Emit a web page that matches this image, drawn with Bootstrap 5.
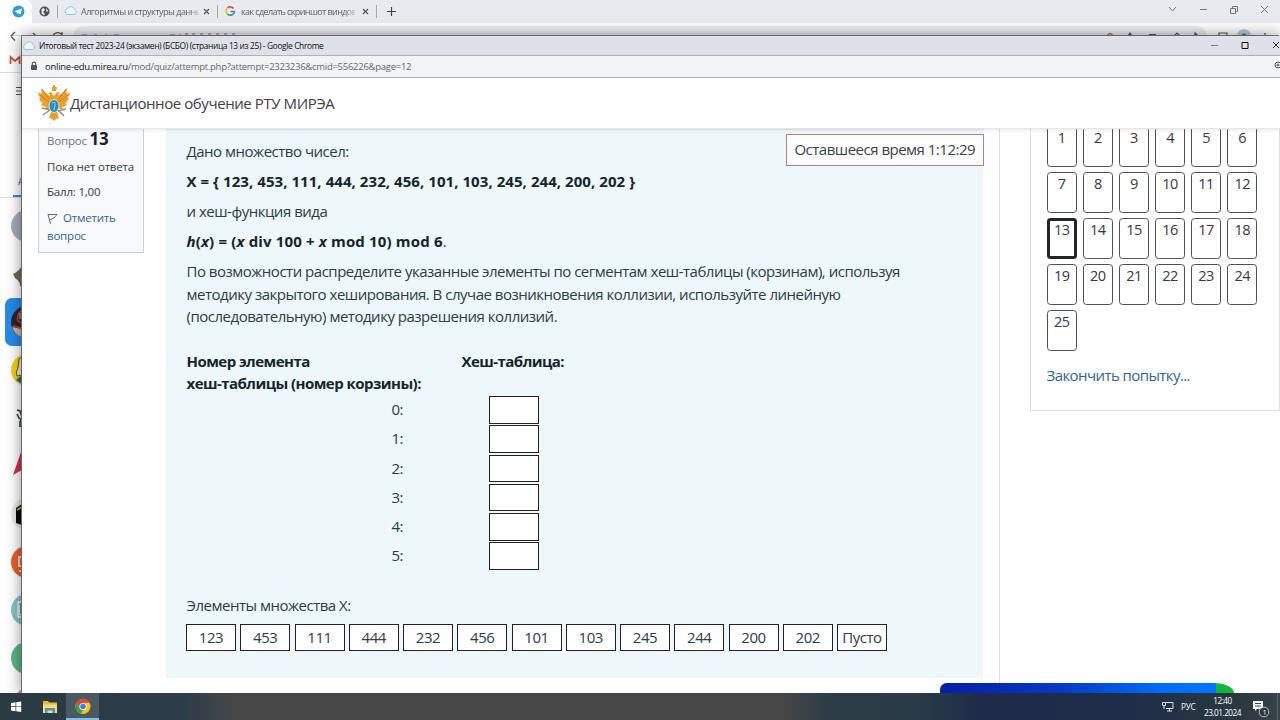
<!DOCTYPE html>
<html lang="ru">
<head>
<meta charset="utf-8">
<title>Итоговый тест 2023-24</title>
<link href="https://cdn.jsdelivr.net/npm/bootstrap@5.3.0/dist/css/bootstrap.min.css" rel="stylesheet">
<script src="https://cdn.jsdelivr.net/npm/bootstrap@5.3.0/dist/js/bootstrap.bundle.min.js"></script>
<style>
body{width:1280px;height:720px;font-family:"Open Sans","Noto Sans",sans-serif;font-size:15px;line-height:22.5px;color:#343a40;background:#fff}
svg{display:block;flex:none}
.win-back,.win-front,.banner,.taskbar{position:absolute}
.win-back{inset:0 0 27px 0}
.tabs{height:23px;background:#e8eaee;font-size:9px;color:#5c5f64;line-height:23px;letter-spacing:-.5px}
.tab-on{width:32px;height:23px;background:#fff;border-radius:0 6px 0 0}
.tab-text{white-space:nowrap;-webkit-mask-image:linear-gradient(90deg,#000 90%,rgba(0,0,0,.3))}
.win-front{left:22px;top:36px;width:1258px;height:657px;background:#fff;box-shadow:0 0 15px rgba(0,0,0,.5),-1px -1px 0 #888}
.titlebar{height:19px;background:#dee1e8;font-size:8.4px;line-height:18px;color:#111;letter-spacing:-.36px}
.urlbar{height:23px;background:#f1f3f5;border-top:1px solid #aeb2b6;border-bottom:1px solid #b4b8bb;font-size:9.5px;line-height:21px;letter-spacing:-.27px;color:#66696d}
.urlbar b{font-weight:400;color:#202124}
.site{height:51px;box-shadow:0 1px 4px rgba(0,0,0,.1);border-bottom:1px solid #e4e6e8;z-index:2;position:relative;background:#fff}
.site-name{font-size:15px;letter-spacing:-.42px;color:#3c4043}
.page-body{height:564px}
.q-info{width:106px;height:124px;margin-left:16px;border:1px solid #cad0d7;border-top:0;background:#f8f9fa;font-size:11.5px;line-height:18px;padding:1px 8px;letter-spacing:-.2px}
.q-info strong{font-size:17px;color:#1d2125;letter-spacing:-.2px}
.q-info .step{margin-bottom:7.6px}
.lnk{color:#326690}
.q-body{width:817px;height:549px;margin-left:22px;background:#eef7fa;padding:10px 0 0 20.5px;color:#2b3d45;border-top:1px solid #dfe9ee;letter-spacing:-.49px}
.q-body p{margin:0 0 7.5px}
.q-body b{color:#14262c}
.q-body .set{letter-spacing:.06px}
.q-body .fn{letter-spacing:.16px}
.timer{position:absolute;left:764px;top:98px;width:197.5px;height:32px;border:1px solid #c07a7c;background:#fff;line-height:29px;text-align:center;color:#3a3f42;z-index:3;letter-spacing:-.5px}
.q-line{border-right:1px solid #dee2e6;width:17px}
.side{width:250px;height:282px;margin-left:30px;border:1px solid #dcdfe3;border-top:0;padding-left:15.5px}
.qn{display:grid;grid-template-columns:repeat(6,30.5px);column-gap:5.6px;row-gap:5.5px;margin-top:-3px}
.qn span{height:40.5px;border:1px solid #4c5156;border-radius:3.5px;text-align:center;line-height:21px;font-size:14.5px;letter-spacing:-.5px}
.qn .now{border:3px solid #22262a;line-height:17.5px}
.finish{margin-top:13px;letter-spacing:-.58px}
.tbl-head{margin-top:22px}
.tbl-head b{width:275px;letter-spacing:-.54px}
.drops{display:grid;grid-template-columns:302.5px 50.4px;row-gap:1.8px;margin-top:1.5px}
.drops span{height:27.5px;line-height:27.5px;padding-left:205px}
.drops i{height:27.5px;background:#fff;border:1px solid #222}
.chips{gap:4.25px;margin-left:-.5px}
.chip{width:50px;height:27.5px;background:#fff;border:1px solid #222;text-align:center;line-height:25px;white-space:nowrap}
.q-body .elems{margin-top:24px}
.banner{left:940px;top:683px;width:294px;height:10px;border-radius:8px 24px 0 0/8px 12px 0 0;background:linear-gradient(90deg,#0420a4,#0738c0 40%,#006cf8 75%,#0074ff 94%,#15b53c 94%)}
.taskbar{left:0;top:693px;width:1280px;height:27px;background:linear-gradient(90deg,#2b3b42 0,#2c3c4a 180px,#474747 235px,#474747 780px,#2c3c46 830px,#293b48 920px,#1f2c49 980px,#1f2d49 1130px,#2a3840 1240px,#394447);color:#fff}
.tb-text{font-size:8.2px;line-height:12px;letter-spacing:-.5px}
.tb-clock{width:37px;padding-top:1px}
</style>
</head>
<body class="overflow-hidden position-relative">
<div class="win-back">
  <div class="tabs d-flex align-items-center">
    <div class="tab-on d-flex align-items-center ps-2"><svg class="ms-1" width="13" height="13" viewBox="0 0 13 13"><circle cx="6.5" cy="6.5" r="6" fill="#2b9fd0"/><path d="M2.4 6.3 10 3.5 8.7 9.8 6.2 8 5.2 9 4.8 7.2z" fill="#fff"/></svg></div>
    <svg width="48" height="23" viewBox="32 0 48 23"><circle cx="44.500" cy="11.500" r="5" fill="#4a4d51"/><path d="M41.500 9l2.500-1 1 2-2 2 2 2-1 1.500-2.500-2zM46 8l2.500 3-2 1z" fill="#e8eaee"/><path d="M57.500 5v13" stroke="#a5a8ac"/><path d="M67 14.500h7a2.600 2.600 0 0 0 .5-5 4 4 0 0 0-7.500-.5 3 3 0 0 0 0 5.500z" fill="#eef5fb" stroke="#97c3dd"/></svg>
    <div class="tab-text" style="width:118px;margin-left:1px">Алгоритмы и структуры данны</div>
    <svg width="40" height="23" viewBox="199 0 40 23"><path d="M204 9l5 5m0-5l-5 5" stroke="#555" stroke-width="1.1"/><path d="M217.500 5v13" stroke="#a5a8ac"/><path d="M233.500 8.500a4 4 0 0 0-6-.5" fill="none" stroke="#e04535" stroke-width="1.500"/><path d="M227.500 8a4 4 0 0 0 0 6" fill="none" stroke="#f3b51d" stroke-width="1.500"/><path d="M227.500 14a4 4 0 0 0 5 .5" fill="none" stroke="#31a350" stroke-width="1.500"/><path d="M230.500 11.500h4q0 2-2 3" fill="none" stroke="#4680ea" stroke-width="1.500"/></svg>
    <div class="tab-text" style="width:114px;margin-left:2px;letter-spacing:-.6px">как сделать скриншот виндов</div>
    <svg width="60" height="23" viewBox="355 0 60 23"><path d="M363 9l5 5m0-5l-5 5" stroke="#555" stroke-width="1.100"/><path d="M376.500 5v13" stroke="#a5a8ac"/><path d="M387 11.500h9M391.500 7v9" stroke="#444" stroke-width="1.200"/></svg>
    <svg class="ms-auto" width="120" height="23" viewBox="1160 0 120 23" fill="none" stroke="#777"><path d="M1169 7l3.500 4 3.500-4M1200 9.500h7M1230.500 8.500h5v5h-5zM1232.500 8.500v-2h5v5h-2M1261 6l7 7m0-7l-7 7"/></svg>
  </div>
  <svg width="1280" height="13" viewBox="0 23 1280 13"><rect y="23" width="1280" height="13" fill="#fff"/><rect x="73" y="26" width="1134" height="22" rx="11" fill="#edeff2"/><path d="M20 36.500H10.500M15 32l-4.500 4.500M33 33l3 3M53 36a5 5 0 0 1 9-1v-3" fill="none" stroke="#555" stroke-width="1.300"/><path d="M82 35h5m7 0h3m8 0h2m7 0h5M170 35h5m5-1v2m5-2h3m4 0h3m5 0h3m5 0h3m5 0h3m5 0h3m5 0h3" stroke="#777" stroke-width="1.200"/><path d="M1107 36q3-5 6 0" stroke="#d66a50" stroke-width="1.500" fill="none"/><path d="M1128 36l2-3 2 3M1149 34.500h7M1174 36l3-3 3 3M1195 36v-3l3 3M1219 36v-3h8v3M1265 33v3" stroke="#555" stroke-width="1.200" fill="none"/><circle cx="1244" cy="36" r="7" fill="#bccbdc"/><path d="M1241 36q3-5 6 0" fill="#455"/></svg>
  <svg width="22" height="657" viewBox="0 36 22 657"><path d="M11 36.500l4 4" stroke="#555" stroke-width="1.300"/><path d="M10.500 64v-7l4.500 4 4.500-4v7" fill="none" stroke="#d84a3d" stroke-width="1.700"/><path d="M0 72.500h22" stroke="#d9dcdf"/><path d="M16 87.500h6M16 91h6M16 94.500h6" stroke="#555"/><text x="18" y="185" font-size="10" fill="#3a78a8">А</text><path d="M0 197.500h22" stroke="#dde2e6"/><path d="M13 196h9" stroke="#3192c5" stroke-width="2"/><circle cx="27" cy="226" r="16" fill="#a5afba"/><path d="M13 274q5-2 9-8v20h-2q0-5-5-8z" fill="#716c50"/><rect x="5" y="298" width="30" height="48" rx="7" fill="#278be9"/><circle cx="27" cy="322" r="16" fill="#33212a"/><path d="M22 310q-6 4-4 11l4 2" stroke="#b64641" stroke-width="1.500" fill="none"/><path d="M20 313v6" stroke="#ddd"/><path d="M12 327l10 2v8q-7-2-10-10z" fill="#c9b99b"/><path d="M13 326l9 2" stroke="#b64641" stroke-width="1.500"/><circle cx="27" cy="370" r="16" fill="#f6cf1d"/><path d="M22 357l-3 2-1 9q-3 4-1 8l5-1" fill="#f9efb4" stroke="#444" stroke-width=".9"/><path d="M16 380l6-5v9z" fill="#216895"/><path d="M17 410l3 1 2 6M17 414l2 4 3 2M22 419l-2 3v5" fill="none" stroke="#263d66" stroke-width="1.600"/><path d="M13 475l8-23h1v18z" fill="#d1354b"/><circle cx="27" cy="514" r="16" fill="#e9e9e9"/><path d="M16 508l6-4v21l-6-2z" fill="#090909"/><path d="M17 510l5-3" stroke="#e8b048" stroke-width="1.500"/><circle cx="27" cy="562" r="16" fill="#ed602b"/><path d="M22 557h-3v9h3M19 571h3" fill="none" stroke="#fff" stroke-width="1.500"/><circle cx="27" cy="610" r="16" fill="#87c3c8"/><path d="M22 602h-4v15h4M20 605v10" fill="none" stroke="#fff" stroke-width="1.300"/><path d="M21 604v10" stroke="#333"/><circle cx="27" cy="658" r="16" fill="#5eb888"/><circle cx="27" cy="700" r="12" fill="#ce899c"/></svg>
</div>

<main class="win-front">
  <div class="titlebar d-flex align-items-center"><svg width="17" height="18" viewBox="0 0 17 18"><path d="M3 12.500h8a3 3 0 0 0 0-5 4 4 0 0 0-7-1 3.500 3.500 0 0 0-1 6z" fill="#eef5fb" stroke="#97bbdd"/></svg><span>Итоговый тест 2023-24 (экзамен) (БСБО) (страница 13 из 25) - Google Chrome</span>
    <svg class="ms-auto" width="80" height="18" viewBox="1200 36 80 18" fill="none"><path d="M1211 44.500h7" stroke="#777"/><path d="M1242 41.500h6v6h-6z" stroke="#111"/><path d="M1273 41l6 6m0-6l-6 6" stroke="#333"/></svg>
  </div>
  <div class="urlbar d-flex"><svg width="23" height="21" viewBox="0 0 23 21"><rect x="9" y="9" width="6" height="5" rx=".7" fill="#555"/><path d="M10.300 9V7.800a1.700 1.700 0 0 1 3.400 0V9" fill="none" stroke="#555" stroke-width="1.100"/></svg><span><b>online-edu.mirea.ru</b>/mod/quiz/attempt.php?attempt=2323236&amp;cmid=556226&amp;page=12</span>
    <svg class="ms-auto" width="8" height="21" viewBox="0 0 8 21" fill="none" stroke="#555"><circle cx="6" cy="9" r="3"/><path d="M4.500 9h3M6 7.500v3"/></svg></div>
  <header class="site d-flex align-items-center">
    <svg class="ms-3" width="32" height="38" viewBox="0 0 32 38"><g fill="#eaa02d"><path d="M13 13Q8 10 3 4q1 4 0 6-2-1-3-2 0 4 3 6l-2 0q1 4 4 5l-2 1q2 3 5 3l-1 2q3 1 6-2zM19 13Q24 10 29 4q-1 4 0 6 2-1 3-2 0 4-3 6l2 0q-1 4-4 5l2 1q-2 3-5 3l1 2q-3 1-6-2z"/><path d="M14 3h1V1h2v2h2l-1 4h-4zM10 9l3-1 3 4 3-4 3 1-2 2v5H12v-5zM13 28l3-2 3 2 2 6-3 1-2 2-2-2-3-1z"/></g><path d="M4 5l7 10M2 11l9 7M28 5l-7 10M30 11l-9 7" stroke="#c4771a" stroke-width=".8"/><path d="M4 24l9 2M28 25l-8 2M5 31l7-5m8 0l6 6" stroke="#8d8f80" stroke-width="1.500"/><ellipse cx="16" cy="22" rx="5" ry="6.500" fill="#2b8dbd" stroke="#dbe5d5"/><path d="M14 19q4-2 3 2t-1 5" stroke="#94d7ee" fill="none"/></svg>
    <span class="site-name">Дистанционное обучение РТУ МИРЭА</span>
  </header>
  <div class="page-body d-flex">
    <aside class="q-info">
      <div class="step"><span class="text-secondary">Вопрос</span> <strong>13</strong></div>
      <div class="step text-nowrap">Пока нет ответа</div><div class="step">Балл: 1,00</div>
      <div class="lnk"><svg class="d-inline-block me-1" width="12" height="12" viewBox="0 0 12 12" fill="none" stroke="#687078"><path d="M1 1.500l2.500 9.500M1 1.500h9L7 5l-4.500 2"/></svg>Отметить вопрос</div>
    </aside>
    <section class="q-body">
      <p>Дано множество чисел:</p>
      <p><b class="set">X = { 123, 453, 111, 444, 232, 456, 101, 103, 245, 244, 200, 202 }</b></p>
      <p>и хеш-функция вида</p>
      <p><b class="fn"><em>h</em>(<em>x</em>) = (<em>x</em> div 100 + <em>x</em> mod 10) mod 6</b>.</p>
      <p class="text-nowrap">По возможности распределите указанные элементы по сегментам хеш-таблицы (корзинам), используя<br>методику закрытого хеширования. В случае возникновения коллизии, используйте линейную<br>(последовательную) методику разрешения коллизий.</p>
      <div class="tbl-head d-flex"><b>Номер элемента<br>хеш-таблицы (номер корзины):</b><b>Хеш-таблица:</b></div>
      <div class="drops"><span>0:</span><i></i><span>1:</span><i></i><span>2:</span><i></i><span>3:</span><i></i><span>4:</span><i></i><span>5:</span><i></i></div>
      <p class="elems">Элементы множества X:</p>
      <div class="chips d-flex"><span class="chip">123</span><span class="chip">453</span><span class="chip">111</span><span class="chip">444</span><span class="chip">232</span><span class="chip">456</span><span class="chip">101</span><span class="chip">103</span><span class="chip">245</span><span class="chip">244</span><span class="chip">200</span><span class="chip">202</span><span class="chip">Пусто</span></div>
    </section>
    <div class="q-line"></div>
    <aside class="side">
      <div class="qn"><span>1</span><span>2</span><span>3</span><span>4</span><span>5</span><span>6</span><span>7</span><span>8</span><span>9</span><span>10</span><span>11</span><span>12</span><span class="now">13</span><span>14</span><span>15</span><span>16</span><span>17</span><span>18</span><span>19</span><span>20</span><span>21</span><span>22</span><span>23</span><span>24</span><span>25</span></div>
      <div class="lnk finish">Закончить попытку...</div>
    </aside>
  </div>
  <div class="timer text-nowrap">Оставшееся время 1:12:29</div>
</main>
<div class="banner"></div>
<footer class="taskbar d-flex align-items-center">
  <svg width="110" height="27" viewBox="0 693 110 27"><rect x="66" y="693" width="33" height="27" fill="#4b5960"/><path d="M66 719h33" stroke="#86bde6" stroke-width="2"/><path d="M11 703l4.500-.7v4H11zM16.200 702.200l5-.8v5h-5zM11 707h4.500v4.200l-4.500-.7zM16.200 707h5v5l-5-.8z" fill="#fff"/><path d="M43 701h5l1 1.500h8V713H43z" fill="#e9b93b"/><path d="M43 704.500h14V713H43z" fill="#fbdc75"/><path d="M45 713v-5h10v5h-2.500v-2.500h-5v2.500z" fill="#4394ce"/><circle cx="83" cy="706.500" r="7.500" fill="#fbc31e"/><path d="M76.500 702.700a7.500 7.500 0 0 1 13 0H83l-3.300 5.700z" fill="#e64234"/><path d="M76.500 702.700l3.200 5.700 3.300 1.900-2 3.500a7.500 7.500 0 0 1-4.500-11.100z" fill="#34a34f"/><circle cx="83" cy="706.500" r="3.600" fill="#fff"/><circle cx="83" cy="706.500" r="2.800" fill="#3e7ee8"/></svg>
  <svg class="ms-auto" width="18" height="27" viewBox="0 0 18 27" fill="none" stroke="#ddd"><path d="M5 9.500h7v6H5M8.500 15.500V18M6 18h5M1.500 9.500h3v3h-3zM3 13v3"/></svg>
  <span class="tb-text" style="margin-left:2px;width:23px;letter-spacing:-.2px">РУС</span>
  <div class="tb-text tb-clock text-center">12:40<br><span class="text-nowrap">23.01.2024</span></div>
  <svg style="margin-left:11px" width="28" height="27" viewBox="0 0 28 27"><path d="M1 8h10v8H5l-2 2v-2H1z" fill="#fff"/><path d="M3 10.500h6M3 13h6" stroke="#344"/><circle cx="12" cy="19" r="4.800" fill="#26353f" stroke="#ddd" stroke-width=".8"/><text x="10.400" y="21.800" font-size="7.500" fill="#fff">1</text><path d="M25.500 0v27" stroke="#5c676b"/></svg>
</footer>
</body>
</html>
